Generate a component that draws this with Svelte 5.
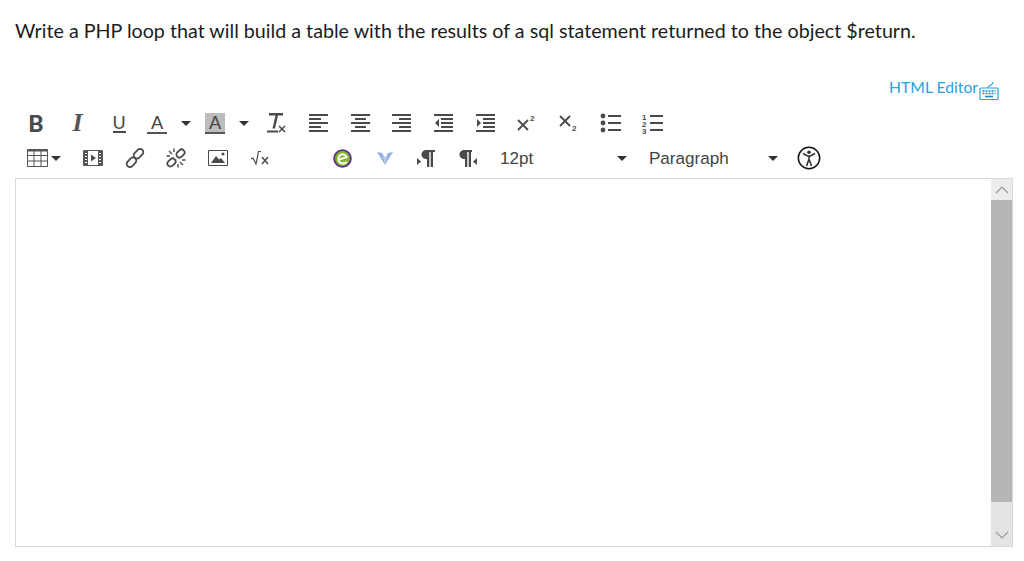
<script lang="ts">
  const ALIGN: Record<string, string> = {
    left: 'M0 1h19M0 5h12M0 9h19M0 13h12M0 17h19',
    center: 'M0 1h19M4 5h11M0 9h19M4 13h11M0 17h19',
    right: 'M0 1h19M7 5h12M0 9h19M7 13h12M0 17h19'
  };
  const INDENT = 'M0 1h19M7 5h12M7 9h12M7 13h12M0 17h19';
</script>

{#snippet lines(d: string, flip = '')}
  <svg class="ico" width="19" height="18" viewBox="0 0 19 18">
    <path d={d} fill="none" stroke="#4a4a4a" stroke-width="2" />
    {#if flip === 'out'}<path d="M5 5v8L1 9z" fill="#4a4a4a" />{/if}
    {#if flip === 'in'}<path d="M1 5v8l4-4z" fill="#4a4a4a" />{/if}
  </svg>
{/snippet}

<main class="page">
  <p class="question">Write a PHP loop that will build a table with the results of a sql statement returned to the object $return.</p>

  <div class="editor-link">
    <span>HTML Editor</span>
    <svg width="20" height="18" viewBox="0 0 20 18" fill="none" stroke="#2a9fdc" stroke-width="1.200">
      <path d="M9 6c0-2 1-2 3-3s2-2 2-3" />
      <rect x="1" y="6" width="18" height="11.500" rx="1" />
      <path d="M3.500 9h13M3.500 11.500h13" stroke="#1f86c0" stroke-width="1.600" stroke-dasharray="2 1" />
      <path d="M6 14.500h8" stroke="#1f86c0" stroke-width="1.600" />
    </svg>
  </div>

  <div class="toolbar">
    <div class="row">
      <span class="btn"><b class="glyph bold">B</b></span>
      <span class="btn"><i class="glyph italic">I</i></span>
      <span class="btn"><span class="glyph under">U</span></span>
      <span class="btn split"><span class="glyph color">A</span></span>
      <span class="btn caret-btn"><span class="caret"></span></span>
      <span class="btn split"><span class="glyph color bg">A</span></span>
      <span class="btn caret-btn"><span class="caret"></span></span>
      <span class="btn">
        <svg width="22" height="22" viewBox="0 0 22 22">
          <path d="M3 1h14v2.500h-5L9 16.500H6.500L9.500 3.500H3z" fill="#4a4a4a" />
          <path d="M1 19.500h11" stroke="#4a4a4a" stroke-width="2" />
          <path d="M13 14l6 6M19 14l-6 6" stroke="#4a4a4a" stroke-width="1.500" />
        </svg>
      </span>
      <span class="btn">{@render lines(ALIGN.left)}</span>
      <span class="btn">{@render lines(ALIGN.center)}</span>
      <span class="btn">{@render lines(ALIGN.right)}</span>
      <span class="btn">{@render lines(INDENT, 'out')}</span>
      <span class="btn">{@render lines(INDENT, 'in')}</span>
      <span class="btn">
        <svg width="20" height="18" viewBox="0 0 20 18">
          <path d="M1 6l10 10M11 6L1 16" stroke="#4a4a4a" stroke-width="1.800" />
          <text x="13" y="7" class="tiny">2</text>
        </svg>
      </span>
      <span class="btn">
        <svg width="20" height="18" viewBox="0 0 20 18">
          <path d="M1 2l10 10M11 2L1 12" stroke="#4a4a4a" stroke-width="1.800" />
          <text x="13" y="17" class="tiny">2</text>
        </svg>
      </span>
      <span class="btn">
        <svg width="21" height="20" viewBox="0 0 21 20">
          <circle cx="3" cy="3" r="2.400" fill="#4a4a4a" />
          <circle cx="3" cy="10" r="2.400" fill="#4a4a4a" />
          <circle cx="3" cy="17" r="2.400" fill="#4a4a4a" />
          <path d="M8 3h13M8 10h13M8 17h13" stroke="#4a4a4a" stroke-width="2" />
        </svg>
      </span>
      <span class="btn">
        <svg width="21" height="21" viewBox="0 0 21 21">
          <text x="0" y="6.500" class="tiny">1</text>
          <text x="0" y="13.500" class="tiny">2</text>
          <text x="0" y="20.500" class="tiny">3</text>
          <path d="M8 3h13M8 10h13M8 17h13" stroke="#4a4a4a" stroke-width="2" />
        </svg>
      </span>
    </div>

    <div class="row">
      <span class="btn table-btn">
        <svg width="21" height="18" viewBox="0 0 21 18" fill="none" stroke="#555">
          <path d="M.5.5h20v17H.5z" />
          <path d="M.5 1.500h20" stroke-width="2" />
          <path d="M.5 6.500h20M.5 12h20M7 1v16M14 1v16" />
        </svg>
        <span class="caret"></span>
      </span>
      <span class="btn">
        <svg width="20" height="16" viewBox="0 0 20 16">
          <path d="M.5.5h19v15H.5z" fill="none" stroke="#555" />
          <path d="M1 1h4v14H1zM15 1h4v14h-4z" fill="#555" />
          <path d="M2 3.500h2M2 6.500h2M2 9.500h2M2 12.500h2M16 3.500h2M16 6.500h2M16 9.500h2M16 12.500h2" stroke="#fff" />
          <path d="M8 4.500v7l5-3.500z" fill="#4a4a4a" />
        </svg>
      </span>
      <span class="btn">
        <svg width="20" height="20" viewBox="0 0 20 20" fill="none" stroke="#4a4a4a" stroke-width="1.800">
          <rect x="8" y="2.500" width="11" height="6.500" rx="3.250" transform="rotate(-45 13.500 5.750)" />
          <rect x="1" y="11" width="11" height="6.500" rx="3.250" transform="rotate(-45 6.500 14.250)" />
        </svg>
      </span>
      <span class="btn">
        <svg width="20" height="20" viewBox="0 0 20 20" fill="none" stroke="#4a4a4a">
          <rect x="10" y="2.500" width="9" height="6" rx="3" stroke-width="1.800" transform="rotate(-45 14.500 5.500)" />
          <rect x="1" y="11.500" width="9" height="6" rx="3" stroke-width="1.800" transform="rotate(-45 5.500 14.500)" />
          <path d="M3 3l3 3M8 .5v3.500M.5 8H4M17 17l-3-3M12 19.500V16M19.500 12H16" stroke-width="1.400" />
        </svg>
      </span>
      <span class="btn">
        <svg width="20" height="16" viewBox="0 0 20 16">
          <path d="M.5.5h19v15H.5z" fill="none" stroke="#4a4a4a" />
          <path d="M3 13l5-7 3 3.500 2-1.500 4 5z" fill="#4a4a4a" />
          <circle cx="15" cy="4" r="1.500" fill="#4a4a4a" />
        </svg>
      </span>
      <span class="btn">
        <svg width="20" height="14" viewBox="0 0 20 14" fill="none" stroke="#4a4a4a">
          <path d="M1 8l2-1 3 6L8.500.5H11" stroke-width="1.200" />
          <path d="M12 6l6 7M18 6l-6 7" stroke-width="1.500" />
        </svg>
      </span>
      <span class="btn"></span>
      <span class="btn">
        <svg width="19" height="19" viewBox="0 0 20 20">
          <circle cx="10" cy="10" r="9.800" fill="#5f2e91" />
          <circle cx="10" cy="10" r="7.800" fill="#84b92f" />
          <path d="M5.500 11.500L14.500 8.500C13.500 5.500 9.500 4.500 7 7C4.500 9.500 5.500 14 9 15C11 15.500 13 15 14.500 13.500" fill="none" stroke="#fff" stroke-width="2" />
        </svg>
      </span>
      <span class="btn">
        <svg width="16" height="13" viewBox="0 0 16 13">
          <path d="M0 0l5 1 3 5 3-5 5-1-8 13z" fill="#8fb0e0" />
          <path d="M5 1l3 5 3-5-3 12z" fill="#b5cbed" />
        </svg>
      </span>
      <span class="btn">
        <svg width="18" height="19" viewBox="0 0 18 19" fill="#4a4a4a">
          <path d="M10 1C6.500 1 4.500 3 4.500 5.500S6.500 10 10 10v8h2.300V3h1.400v15H16V3h2V1z" />
          <path d="M0 9v7l4-3.500z" />
        </svg>
      </span>
      <span class="btn">
        <svg width="18" height="19" viewBox="0 0 18 19" fill="#4a4a4a">
          <path d="M6 1C2.500 1 .5 3 .5 5.500S2.500 10 6 10v8h2.300V3h1.400v15H12V3h1V1z" />
          <path d="M18 9v7l-4-3.500z" />
        </svg>
      </span>
      <span class="select size"><span>12pt</span><span class="caret"></span></span>
      <span class="select format"><span>Paragraph</span><span class="caret"></span></span>
      <span class="btn">
        <svg width="24" height="24" viewBox="0 0 24 24">
          <circle cx="12" cy="12" r="10.700" fill="#fff" stroke="#111" stroke-width="1.500" />
          <circle cx="12" cy="6.200" r="1.800" fill="#333" />
          <path d="M6 7.500l4.500 2.500h3L18 7.500M12 10v4.500M9.500 20l2-5.500h1l2 5.500" fill="none" stroke="#333" stroke-width="1.600" />
        </svg>
      </span>
    </div>
  </div>

  <div class="editor">
    <div class="area"></div>
    <div class="scrollbar">
      <span class="arrow">
        <svg width="14" height="8" viewBox="0 0 14 8"><path d="M1 7l6-6 6 6" fill="none" stroke="#999" stroke-width="1.200" /></svg>
      </span>
      <span class="thumb"></span>
      <span class="track">
        <svg width="14" height="8" viewBox="0 0 14 8"><path d="M1 1l6 6 6-6" fill="none" stroke="#999" stroke-width="1.200" /></svg>
      </span>
    </div>
  </div>
</main>

<style>
  :global(body) {
    background: #fff;
  }

  .page {
    display: flex;
    flex-direction: column;
    width: 1024px;
    height: 561px;
    padding: 18px 11px 14px 15px;
    box-sizing: border-box;
    font-family: Lato, sans-serif;
    color: #2d3b45;
  }

  .question {
    margin: 0;
    height: 25px;
    font-size: 19.7px;
    line-height: 25px;
    color: #1c1c1c;
    white-space: nowrap;
  }

  .editor-link {
    display: flex;
    justify-content: flex-end;
    align-items: flex-end;
    gap: 1px;
    height: 24px;
    margin-top: 33px;
    padding-right: 14px;
    font-size: 15.7px;
    line-height: 20px;
    color: #2a9fdc;
  }

  .editor-link span {
    margin-bottom: 3px;
  }

  .toolbar {
    display: flex;
    flex-direction: column;
    gap: 3px;
    margin-top: 7px;
  }

  .row {
    display: flex;
    align-items: center;
    height: 32px;
  }

  .btn {
    display: flex;
    align-items: center;
    justify-content: center;
    flex: none;
    width: 41.7px;
    height: 32px;
  }

  .btn.split {
    width: 34px;
  }

  .btn.caret-btn {
    width: 24px;
  }

  .btn.table-btn {
    width: 57px;
    gap: 3px;
  }

  .caret {
    display: block;
    flex: none;
    width: 0;
    height: 0;
    border: 5px solid transparent;
    border-top-color: #333;
    border-bottom: 0;
  }

  .glyph {
    display: block;
    font-style: normal;
    color: #4a4a4a;
  }

  .bold {
    font-size: 23px;
    font-weight: 900;
  }

  .italic {
    font-size: 26px;
    font-weight: 700;
    font-style: italic;
    font-family: "Liberation Serif", serif;
    color: #555;
  }

  .under {
    font-size: 18px;
    line-height: 18px;
    border-bottom: 2px solid #4a4a4a;
  }

  .color {
    width: 20px;
    font-size: 18px;
    font-weight: 500;
    line-height: 19px;
    text-align: center;
    border-bottom: 2px solid #555;
  }

  .color.bg {
    background: #bdbdbd;
  }

  .tiny {
    font-family: "Liberation Sans", sans-serif;
    font-size: 8px;
    font-weight: 700;
    fill: #4a4a4a;
  }

  .select {
    display: flex;
    align-items: center;
    justify-content: space-between;
    flex: none;
    box-sizing: border-box;
    height: 32px;
    padding-top: 1px;
    font-family: "Liberation Sans", sans-serif;
    font-size: 17.1px;
    color: #444;
  }

  .select.size {
    width: 148px;
    padding-left: 11px;
    padding-right: 10px;
  }

  .select.format {
    width: 151px;
    padding-left: 12px;
    padding-right: 10px;
  }

  .editor {
    display: flex;
    flex: 1;
    margin-top: 4px;
    border: 1px solid #d9d9d9;
  }

  .area {
    flex: 1;
  }

  .scrollbar {
    display: flex;
    flex-direction: column;
    flex: none;
    width: 21px;
    background: #e4e4e4;
  }

  .arrow {
    display: flex;
    align-items: center;
    justify-content: center;
    height: 21px;
    background: #ececec;
  }

  .thumb {
    display: block;
    height: 302px;
    background: #b6b6b6;
  }

  .track {
    display: flex;
    flex: 1;
    align-items: flex-end;
    justify-content: center;
    padding-bottom: 7px;
  }
</style>
